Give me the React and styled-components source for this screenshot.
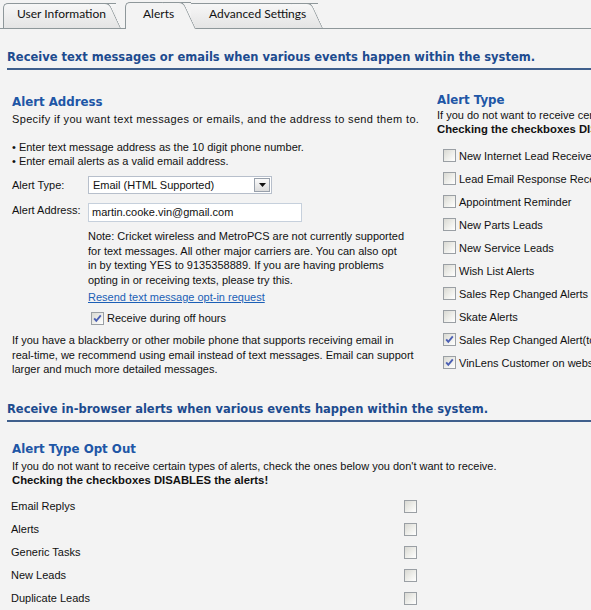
import React from "react";
import styled, { createGlobalStyle } from "styled-components";

const GlobalStyle = createGlobalStyle`
  html, body {
    margin: 0;
    padding: 0;
    background: #f3f3f3;
  }
  body {
    font-family: "Liberation Sans", Arial, sans-serif;
    font-size: 11px;
    color: #111;
    width: 591px;
    overflow: hidden;
  }
`;

const Page = styled.div`
  width: 591px;
  height: 610px;
  overflow: hidden;
  background: #f3f3f3;
`;

const TabBar = styled.div`
  display: flex;
  align-items: flex-end;
  height: 29px;
  padding-left: 3px;
  border-bottom: 1px solid #8e979a;
  box-sizing: border-box;
`;

const Tab = styled.div`
  position: relative;
  width: ${({ width }) => width}px;
  height: ${({ active }) => (active ? 27 : 25)}px;
  margin-left: ${({ overlap }) => -overlap || 0}px;
  margin-bottom: ${({ active }) => (active ? -1 : 0)}px;
  padding-left: ${({ indent }) => indent}px;
  box-sizing: border-box;
  z-index: ${({ active, order }) => (active ? 10 : order)};
  font-family: Lato, "Liberation Sans", sans-serif;
  font-size: 12px;
  color: #111;
  line-height: ${({ active }) => (active ? 24 : 22)}px;
  white-space: nowrap;

  &::before {
    content: "";
    position: absolute;
    top: 0;
    left: 0;
    bottom: 0;
    right: 12px;
    border: 1px solid #8e979a;
    border-right: none;
    border-bottom: none;
    border-top-left-radius: 5px;
    background: ${({ active }) =>
      active ? "#f3f3f3" : "linear-gradient(#f7f7f7, #e4e4e4)"};
    z-index: -1;
  }

  &::after {
    content: "";
    position: absolute;
    top: 0;
    bottom: 0;
    right: 7px;
    width: 20px;
    border-top: 1px solid #8e979a;
    border-right: 1px solid #8e979a;
    border-top-right-radius: 5px;
    background: ${({ active }) =>
      active ? "#f3f3f3" : "linear-gradient(#f7f7f7, #e4e4e4)"};
    transform: skewX(25deg);
    transform-origin: bottom left;
    z-index: -1;
  }
`;

const TabLabel = styled.span`
  position: relative;
`;

const Section = styled.section`
  padding-left: 7px;
`;

const SectionTitle = styled.h2`
  margin: ${({ top }) => top}px 0 0 0;
  padding-bottom: 4px;
  border-bottom: 2px solid #3f5f8c;
  font-family: "DejaVu Sans", Verdana, sans-serif;
  font-size: 11.5px;
  font-weight: bold;
  color: #1d4b8f;
  line-height: 14px;
  white-space: nowrap;
`;

const Columns = styled.div`
  display: flex;
`;

const LeftColumn = styled.div`
  width: 430px;
  flex: none;
  padding-left: 5px;
  box-sizing: border-box;
`;

const RightColumn = styled.div`
  flex: 1;
  overflow: hidden;
  white-space: nowrap;
`;

const Block = styled.div`
  padding-left: 5px;
  white-space: nowrap;
`;

const Heading = styled.h3`
  margin: ${({ top }) => top}px 0 0 0;
  font-family: "DejaVu Sans", Verdana, sans-serif;
  font-size: 11.8px;
  font-weight: bold;
  color: #2056a6;
  line-height: 16px;
  white-space: nowrap;
`;

const Text = styled.p`
  margin: ${({ top }) => top || 0}px 0 0 0;
  line-height: ${({ lh }) => lh || 14}px;
  font-weight: ${({ bold }) => (bold ? "bold" : "normal")};
  font-size: ${({ bold }) => (bold ? 11.3 : 11)}px;
  letter-spacing: ${({ wide }) => (wide ? "0.35px" : "normal")};
`;

const Bullets = styled.div`
  margin-top: 14px;
  line-height: 14px;
`;

const FormRow = styled.div`
  display: flex;
  align-items: ${({ align }) => align || "center"};
  margin-top: ${({ top }) => top}px;
`;

const FieldLabel = styled.label`
  width: 76px;
  flex: none;
  line-height: 14px;
`;

const Select = styled.div`
  display: flex;
  align-items: center;
  width: 184px;
  height: 18px;
  box-sizing: border-box;
  border: 1px solid #b7bfcb;
  background: #fff;
  padding: 0 1px 0 4px;
  font-size: 11px;
`;

const SelectValue = styled.span`
  flex: 1;
`;

const DropButton = styled.span`
  display: flex;
  align-items: center;
  justify-content: center;
  width: 16px;
  height: 14px;
  box-sizing: border-box;
  border: 1px solid #98a0ab;
  background: linear-gradient(#fafafa, #dcdcdc);
`;

const Input = styled.div`
  width: 214px;
  height: 19px;
  box-sizing: border-box;
  border: 1px solid #c6d0dc;
  background: #fff;
  padding: 0 3px;
  line-height: 17px;
  font-size: 11px;
`;

const Note = styled.div`
  margin: 7px 0 0 76px;
  line-height: 14.6px;
`;

const Link = styled.a`
  display: inline-block;
  margin: 3px 0 0 76px;
  color: #1b5fb6;
  text-decoration: underline;
  line-height: 14px;
`;

const CheckRow = styled.div`
  display: flex;
  align-items: center;
  gap: 3px;
  height: ${({ h }) => h || 23}px;
  margin-left: ${({ indent }) => indent || 0}px;
  margin-top: ${({ top }) => top || 0}px;
  white-space: nowrap;
`;

const Box = styled.span`
  position: relative;
  display: inline-block;
  flex: none;
  width: 13px;
  height: 13px;
  box-sizing: border-box;
  border: 1px solid #9a9fa4;
  background: linear-gradient(135deg, #d9d9d3 0%, #efefeb 55%, #ffffff 100%);

  svg {
    position: absolute;
    top: 1px;
    left: 1px;
  }
`;

const CheckList = styled.div`
  margin: 8px 0 0 6px;
`;

const OptRow = styled.div`
  display: flex;
  align-items: center;
  height: 23px;
`;

const OptLabel = styled.span`
  width: 393px;
  flex: none;
  padding-left: 4px;
`;

const OptList = styled.div`
  margin-top: 8px;
`;

const Check = ({ checked }) => (
  <Box>
    {checked && (
      <svg width="9" height="9" viewBox="0 0 9 9">
        <polyline
          points="1.2,4.3 3.3,6.8 7.8,1.4"
          fill="none"
          stroke="#4b5fb3"
          strokeWidth="1.9"
        />
      </svg>
    )}
  </Box>
);

const alertTypes = [
  ["New Internet Lead Received", false],
  ["Lead Email Response Received", false],
  ["Appointment Reminder", false],
  ["New Parts Leads", false],
  ["New Service Leads", false],
  ["Wish List Alerts", false],
  ["Sales Rep Changed Alerts", false],
  ["Skate Alerts", false],
  ["Sales Rep Changed Alert(to me)", true],
  ["VinLens Customer on website", true],
];

const optOuts = ["Email Replys", "Alerts", "Generic Tasks", "New Leads", "Duplicate Leads"];

export default function App() {
  return (
    <Page>
      <GlobalStyle />
      <TabBar>
        <Tab width={125} indent={14} order={1}>
          <TabLabel>User Information</TabLabel>
        </Tab>
        <Tab width={78} indent={18} overlap={3} active>
          <TabLabel>Alerts</TabLabel>
        </Tab>
        <Tab width={143} indent={22} overlap={16} order={2}>
          <TabLabel>Advanced Settings</TabLabel>
        </Tab>
      </TabBar>

      <Section>
        <SectionTitle top={21}>
          Receive text messages or emails when various events happen within the system.
        </SectionTitle>
        <Columns>
          <LeftColumn>
            <Heading top={24}>Alert Address</Heading>
            <Text top={2} wide>
              Specify if you want text messages or emails, and the address to send them to.
            </Text>
            <Bullets>
              • Enter text message address as the 10 digit phone number.
              <br />• Enter email alerts as a valid email address.
            </Bullets>
            <FormRow top={8}>
              <FieldLabel>Alert Type:</FieldLabel>
              <Select>
                <SelectValue>Email (HTML Supported)</SelectValue>
                <DropButton>
                  <svg width="7" height="4" viewBox="0 0 7 4">
                    <polygon points="0,0 7,0 3.5,4" fill="#111" />
                  </svg>
                </DropButton>
              </Select>
            </FormRow>
            <FormRow top={9} align="flex-start">
              <FieldLabel>Alert Address:</FieldLabel>
              <Input>martin.cooke.vin@gmail.com</Input>
            </FormRow>
            <Note>
              Note: Cricket wireless and MetroPCS are not currently supported
              <br />
              for text messages. All other major carriers are. You can also opt
              <br />
              in by texting YES to 9135358889. If you are having problems
              <br />
              opting in or receiving texts, please try this.
            </Note>
            <Link href="#">Resend text message opt-in request</Link>
            <CheckRow indent={79} top={3} h={22}>
              <Check checked />
              <span>Receive during off hours</span>
            </CheckRow>
            <Text top={4} lh={14.5}>
              If you have a blackberry or other mobile phone that supports receiving email in
              <br />
              real-time, we recommend using email instead of text messages. Email can support
              <br />
              larger and much more detailed messages.
            </Text>
          </LeftColumn>
          <RightColumn>
            <Heading top={22}>Alert Type</Heading>
            <Text top={0}>
              If you do not want to receive certain types of alerts, check the ones below you don't want to receive.
            </Text>
            <Text bold>Checking the checkboxes DISABLES the alerts!</Text>
            <CheckList>
              {alertTypes.map(([label, on]) => (
                <CheckRow key={label}>
                  <Check checked={on} />
                  <span>{label}</span>
                </CheckRow>
              ))}
            </CheckList>
          </RightColumn>
        </Columns>

        <SectionTitle top={25}>
          Receive in-browser alerts when various events happen within the system.
        </SectionTitle>
        <Block>
          <Heading top={19}>Alert Type Opt Out</Heading>
          <Text top={2}>
            If you do not want to receive certain types of alerts, check the ones below you don't want to receive.
          </Text>
          <Text bold>Checking the checkboxes DISABLES the alerts!</Text>
        </Block>
        <OptList>
          {optOuts.map((label) => (
            <OptRow key={label}>
              <OptLabel>{label}</OptLabel>
              <Check />
            </OptRow>
          ))}
        </OptList>
      </Section>
    </Page>
  );
}
